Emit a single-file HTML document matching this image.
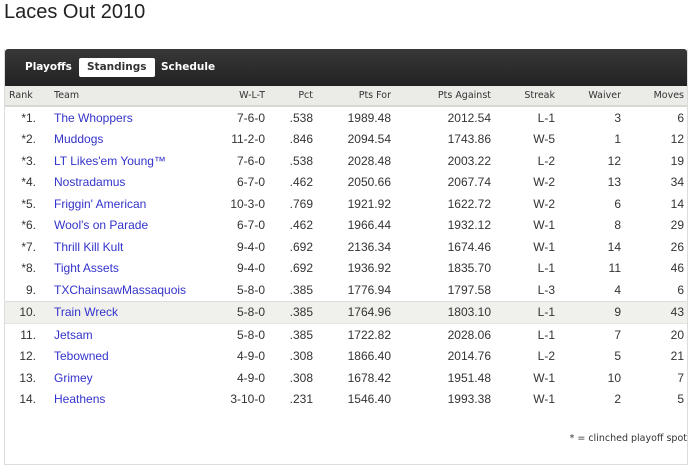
<!DOCTYPE html>
<html><head><style>
body{margin:0;background:#fff;font-family:"Liberation Sans",Arial,sans-serif;width:690px;height:468px;overflow:hidden;position:relative}
h1{position:absolute;left:4px;top:0;margin:0;font-weight:normal;font-size:20px;line-height:24px;color:#222}
.box{position:absolute;left:4px;top:49px;width:682px;height:415px;border:1px solid #ddd;border-top:none}
.bar{height:37px;background:linear-gradient(#383838,#222);border-radius:3px 3px 0 0;position:relative}
.tab{position:absolute;top:9px;height:19px;line-height:19px;font-size:10.5px;font-weight:bold;color:#fff;font-family:"DejaVu Sans",Verdana,sans-serif;padding:0 8px}
.tab.on{background:#fff;color:#333;border-radius:2px}
table{border-collapse:collapse;position:absolute;left:0;top:37px;width:682px;table-layout:fixed}
th{font-family:"DejaVu Sans",Verdana,sans-serif;font-weight:normal;font-size:9.5px;color:#333;background:#ebebe8;height:19px;border-bottom:2px solid #d8d8d2;text-align:right;padding:0;white-space:nowrap;overflow:hidden}
td{font-size:12px;color:#333;height:21.5px;padding:0;text-align:right;white-space:nowrap}
td.t{color:#33c;text-align:left}
td.m,th.m{padding-right:3px}
tr.hl td{background:#f0f0ec;border-top:1px solid #ddd;border-bottom:1px solid #e4e4e0}
.foot{position:absolute;right:0;top:384px;font-family:"DejaVu Sans",Verdana,sans-serif;font-size:9.5px;color:#333}
</style></head><body>
<h1>Laces Out 2010</h1>
<div class="box">
<div class="bar"><span class="tab" style="left:12px">Playoffs</span><span class="tab on" style="left:74px">Standings</span><span class="tab" style="left:148px">Schedule</span></div>
<table>
<colgroup><col style="width:31px"><col style="width:18px"><col style="width:135px"><col style="width:76px"><col style="width:48px"><col style="width:78px"><col style="width:100px"><col style="width:64px"><col style="width:66px"><col style="width:66px"></colgroup>
<tr><th style="text-align:left;padding-left:4px">Rank</th><th></th><th style="text-align:left">Team</th><th>W-L-T</th><th>Pct</th><th>Pts For</th><th>Pts Against</th><th>Streak</th><th>Waiver</th><th class="m">Moves</th></tr>
</table>
<table style="top:58px">
<colgroup><col style="width:31px"><col style="width:18px"><col style="width:135px"><col style="width:76px"><col style="width:48px"><col style="width:78px"><col style="width:100px"><col style="width:64px"><col style="width:66px"><col style="width:66px"></colgroup>
<tr><td>*1.</td><td></td><td class="t">The Whoppers</td><td>7-6-0</td><td>.538</td><td>1989.48</td><td>2012.54</td><td>L-1</td><td>3</td><td class="m">6</td></tr>
<tr><td>*2.</td><td></td><td class="t">Muddogs</td><td>11-2-0</td><td>.846</td><td>2094.54</td><td>1743.86</td><td>W-5</td><td>1</td><td class="m">12</td></tr>
<tr><td>*3.</td><td></td><td class="t">LT Likes'em Young™</td><td>7-6-0</td><td>.538</td><td>2028.48</td><td>2003.22</td><td>L-2</td><td>12</td><td class="m">19</td></tr>
<tr><td>*4.</td><td></td><td class="t">Nostradamus</td><td>6-7-0</td><td>.462</td><td>2050.66</td><td>2067.74</td><td>W-2</td><td>13</td><td class="m">34</td></tr>
<tr><td>*5.</td><td></td><td class="t">Friggin' American</td><td>10-3-0</td><td>.769</td><td>1921.92</td><td>1622.72</td><td>W-2</td><td>6</td><td class="m">14</td></tr>
<tr><td>*6.</td><td></td><td class="t">Wool's on Parade</td><td>6-7-0</td><td>.462</td><td>1966.44</td><td>1932.12</td><td>W-1</td><td>8</td><td class="m">29</td></tr>
<tr><td>*7.</td><td></td><td class="t">Thrill Kill Kult</td><td>9-4-0</td><td>.692</td><td>2136.34</td><td>1674.46</td><td>W-1</td><td>14</td><td class="m">26</td></tr>
<tr><td>*8.</td><td></td><td class="t">Tight Assets</td><td>9-4-0</td><td>.692</td><td>1936.92</td><td>1835.70</td><td>L-1</td><td>11</td><td class="m">46</td></tr>
<tr><td>9.</td><td></td><td class="t">TXChainsawMassaquois</td><td>5-8-0</td><td>.385</td><td>1776.94</td><td>1797.58</td><td>L-3</td><td>4</td><td class="m">6</td></tr>
<tr class="hl"><td>10.</td><td></td><td class="t">Train Wreck</td><td>5-8-0</td><td>.385</td><td>1764.96</td><td>1803.10</td><td>L-1</td><td>9</td><td class="m">43</td></tr>
<tr><td>11.</td><td></td><td class="t">Jetsam</td><td>5-8-0</td><td>.385</td><td>1722.82</td><td>2028.06</td><td>L-1</td><td>7</td><td class="m">20</td></tr>
<tr><td>12.</td><td></td><td class="t">Tebowned</td><td>4-9-0</td><td>.308</td><td>1866.40</td><td>2014.76</td><td>L-2</td><td>5</td><td class="m">21</td></tr>
<tr><td>13.</td><td></td><td class="t">Grimey</td><td>4-9-0</td><td>.308</td><td>1678.42</td><td>1951.48</td><td>W-1</td><td>10</td><td class="m">7</td></tr>
<tr><td>14.</td><td></td><td class="t">Heathens</td><td>3-10-0</td><td>.231</td><td>1546.40</td><td>1993.38</td><td>W-1</td><td>2</td><td class="m">5</td></tr>
</table>
<div class="foot">* = clinched playoff spot</div>
</div>
</body></html>
